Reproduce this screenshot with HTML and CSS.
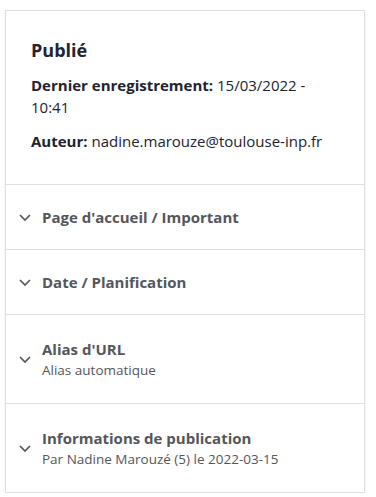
FILE: index.html
```html
<!DOCTYPE html>
<html lang="fr">
<head>
<meta charset="utf-8">
<link rel="stylesheet" href="styles.css">
</head>
<body>
<div class="card">
  <div class="meta-header">
    <h2 class="status">Publié</h2>
    <p class="meta-line"><strong>Dernier enregistrement:</strong> 15/03/2022 - 10:41</p>
    <p class="meta-line"><strong>Auteur:</strong> nadine.marouze@toulouse-inp.fr</p>
  </div>
  <div class="section">
    <svg class="chev" viewBox="0 0 12 7" width="12" height="7"><path d="M1 1l5 5 5-5" fill="none" stroke="#55565b" stroke-width="1.7"/></svg>
    <div class="sec-text"><div class="sec-title">Page d'accueil / Important</div></div>
  </div>
  <div class="section">
    <svg class="chev" viewBox="0 0 12 7" width="12" height="7"><path d="M1 1l5 5 5-5" fill="none" stroke="#55565b" stroke-width="1.7"/></svg>
    <div class="sec-text"><div class="sec-title">Date / Planification</div></div>
  </div>
  <div class="section tall">
    <svg class="chev" viewBox="0 0 12 7" width="12" height="7"><path d="M1 1l5 5 5-5" fill="none" stroke="#55565b" stroke-width="1.7"/></svg>
    <div class="sec-text"><div class="sec-title">Alias d'URL</div><div class="sec-sum">Alias automatique</div></div>
  </div>
  <div class="section tall">
    <svg class="chev" viewBox="0 0 12 7" width="12" height="7"><path d="M1 1l5 5 5-5" fill="none" stroke="#55565b" stroke-width="1.7"/></svg>
    <div class="sec-text"><div class="sec-title">Informations de publication</div><div class="sec-sum">Par Nadine Marouzé (5) le 2022-03-15</div></div>
  </div>
</div>
</body>
</html>
```
FILE: styles.css
```css
html, body { margin: 0; padding: 0; background: #fff; }
body { font-family: "Open Sans", "Noto Sans", sans-serif; color: #222330; padding: 10px 11px 0 5px; }
.card { border: 1px solid #dedfe4; box-shadow: 0 1px 3px rgba(0,0,0,0.08); background: #fff; }
.meta-header { padding: 26px 24px 26px 25px; border-bottom: 1px solid #dedfe4; height: 121px; }
.status { margin: 0 0 11px; font-size: 18px; line-height: 26px; font-weight: 700; }
.meta-line { margin: 0 0 12px; font-size: 15px; line-height: 22px; }
.meta-line strong { font-weight: 700; }
.section { display: flex; align-items: center; border-bottom: 1px solid #dedfe4; height: 64px; padding-left: 13px; }
.section:last-child { border-bottom: none; }
.section.tall { height: 88px; }
.chev { flex: none; margin-right: 11px; display: block; }
.sec-title { font-size: 15px; line-height: 20px; font-weight: 700; color: #55565b; }
.sec-sum { font-size: 13.5px; line-height: 20px; color: #55565b; margin-top: 1px; }
```
